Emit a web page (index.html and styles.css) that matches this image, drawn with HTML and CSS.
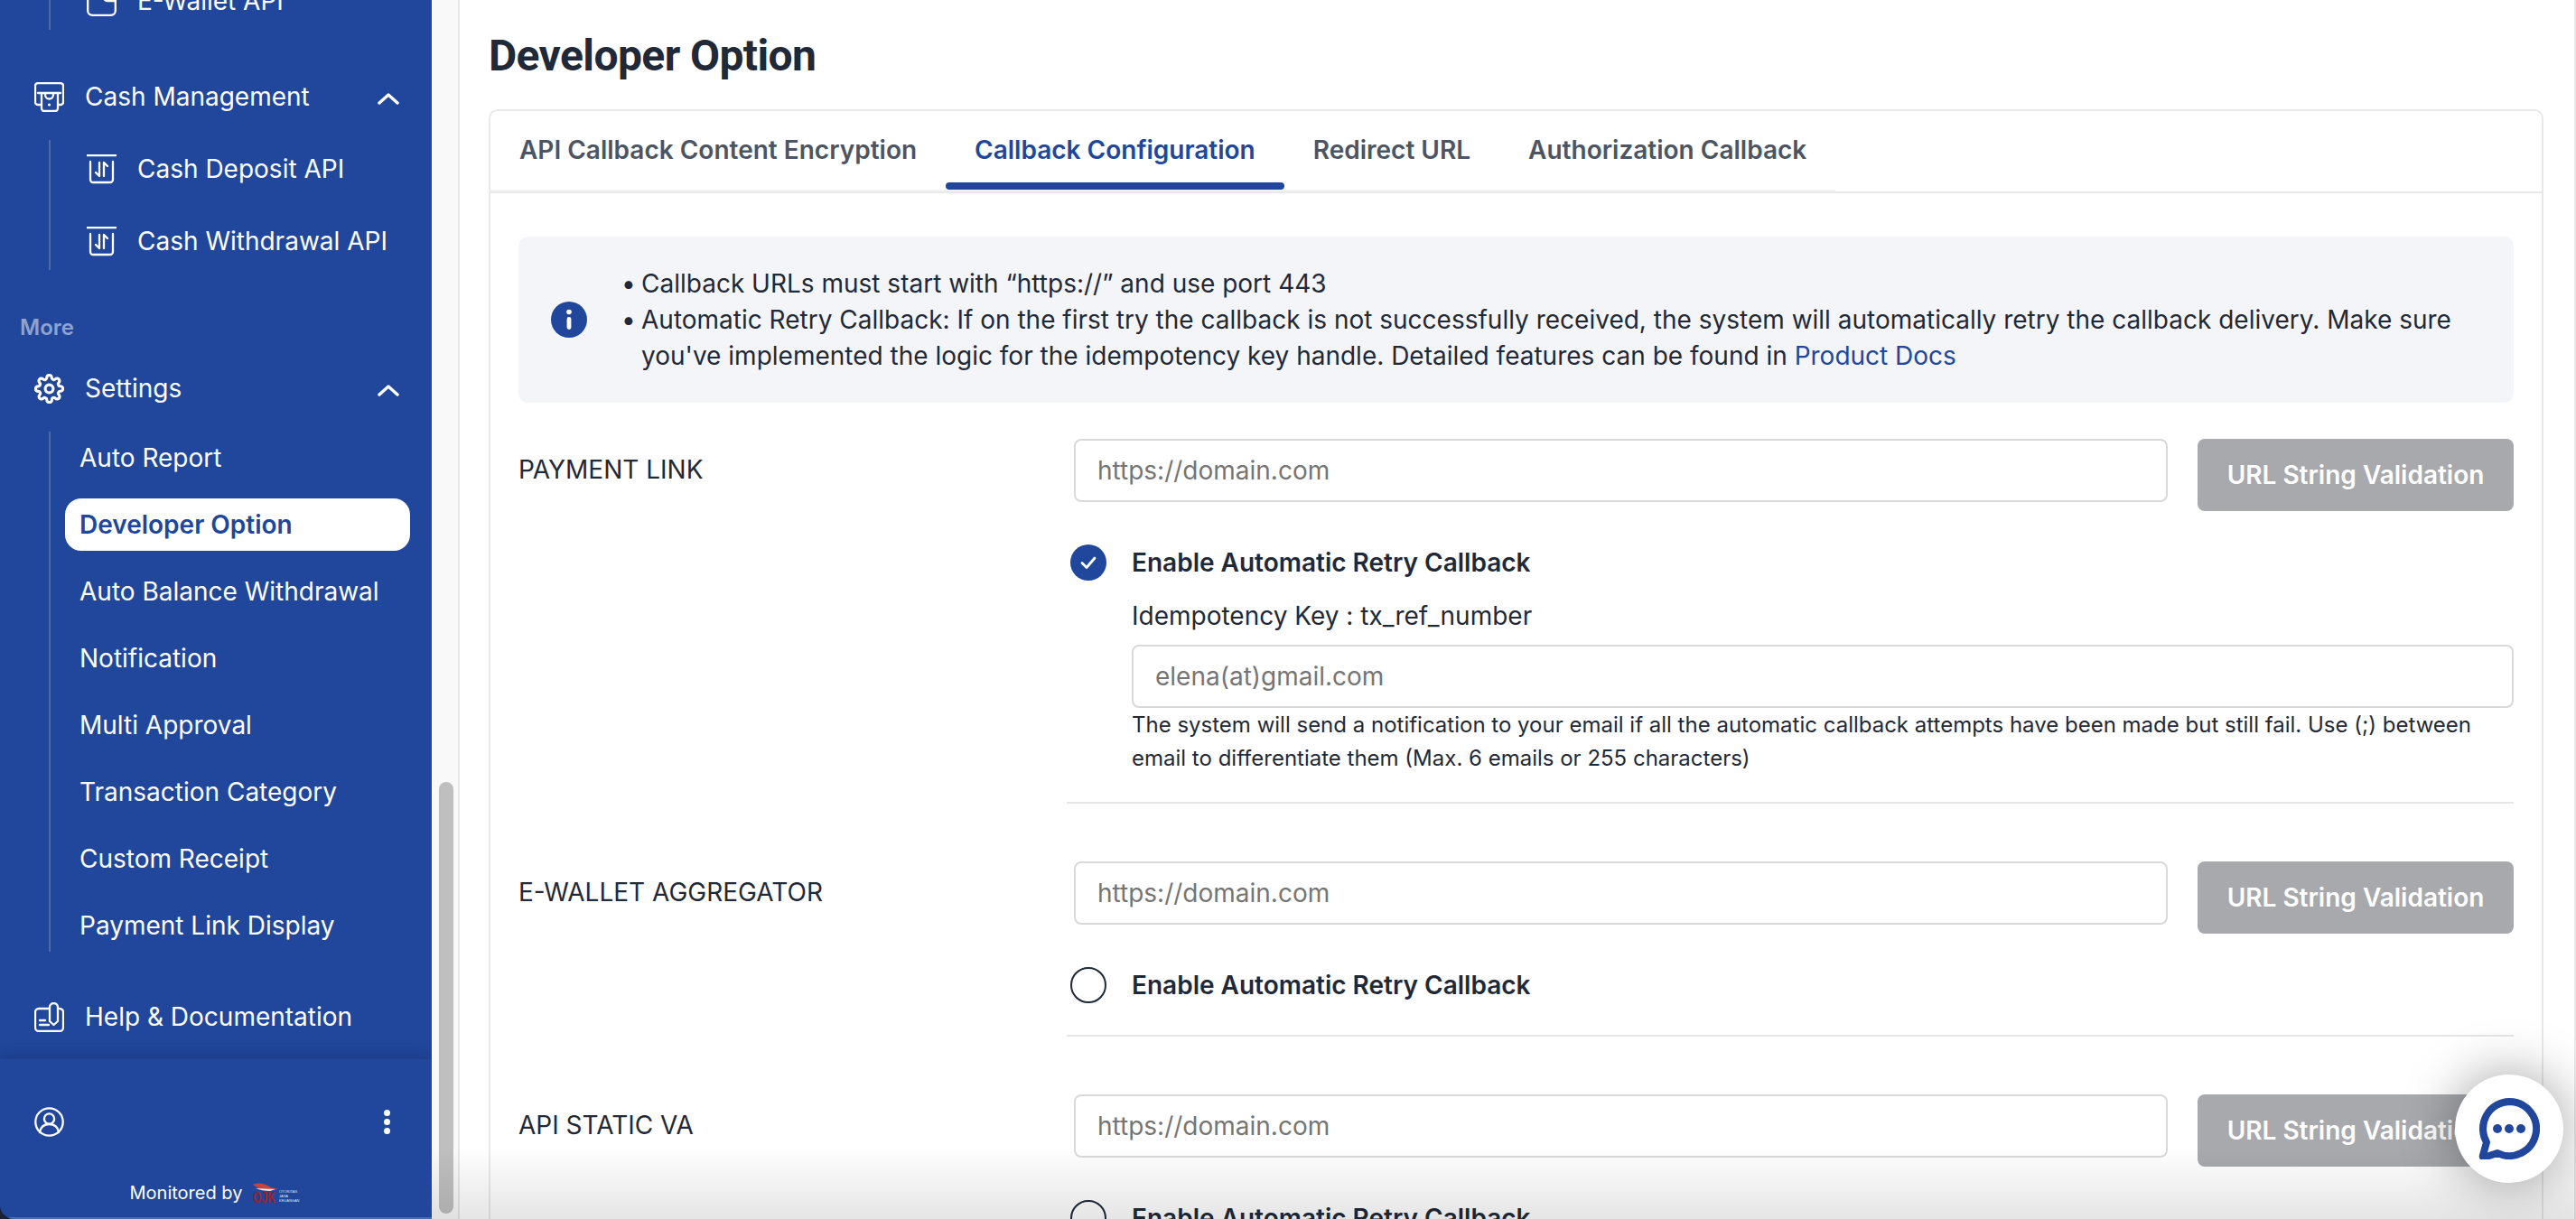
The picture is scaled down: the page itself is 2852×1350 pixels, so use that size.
FILE: index.html
```html
<!DOCTYPE html>
<html lang="en">

<head>
    <meta charset="UTF-8">
    <meta name="viewport" content="width=device-width, initial-scale=1.0">
    <title>Developer Option</title>
    <link rel="stylesheet" href="styles.css">
</head>

<body>
    <aside class="sidebar">
        <nav class="nav">
            <ul class="sub-list sub-list-api">
                <li class="sub-item">
                    <svg class="icon" viewBox="0 0 33 33"><rect x="1.2" y="1.2" width="30.6" height="30.6" rx="5"/><path d="M32 8H23a4 4 0 0 0 0 8h9"/></svg>
                    E-Wallet API
                </li>
            </ul>

            <div class="nav-group">
                <svg class="icon" viewBox="0 0 33 33"><path d="M7 25H4a3 3 0 0 1-3-3V4a3 3 0 0 1 3-3h25a3 3 0 0 1 3 3v18a3 3 0 0 1-3 3h-3M4 12h25M8 12v17a3 3 0 0 0 3 3h12a3 3 0 0 0 3-3V12M12 12v2a4.5 4.5 0 0 0 9 0v-2"/><circle class="dot" cx="16.5" cy="25" r="1.6"/></svg>
                Cash Management
                <svg class="chevron" viewBox="0 0 24 14"><path d="M2 12l10-9 10 9"/></svg>
            </div>
            <ul class="sub-list sub-list-api">
                <li class="sub-item">
                    <svg class="icon" viewBox="0 0 33 33"><path d="M0 1.2h33M4 8v20a3 3 0 0 0 3 3h19a3 3 0 0 0 3-3V8M14 9v15l-4-4M19 24V9l4 4"/></svg>
                    Cash Deposit API
                </li>
                <li class="sub-item">
                    <svg class="icon" viewBox="0 0 33 33"><path d="M0 1.2h33M4 8v20a3 3 0 0 0 3 3h19a3 3 0 0 0 3-3V8M14 9v15l-4-4M19 24V9l4 4"/></svg>
                    Cash Withdrawal API
                </li>
            </ul>

            <div class="nav-title">More</div>

            <div class="nav-group nav-group-settings">
                <svg class="icon" viewBox="0 0 24 24"><circle cx="12" cy="12" r="3.2"/><path d="M19.4 15a1.65 1.65 0 0 0 .33 1.82l.06.06a2 2 0 0 1 0 2.83 2 2 0 0 1-2.83 0l-.06-.06a1.65 1.65 0 0 0-1.82-.33 1.65 1.65 0 0 0-1 1.51V21a2 2 0 0 1-2 2 2 2 0 0 1-2-2v-.09A1.65 1.65 0 0 0 9 19.4a1.65 1.65 0 0 0-1.82.33l-.06.06a2 2 0 0 1-2.83 0 2 2 0 0 1 0-2.83l.06-.06a1.65 1.65 0 0 0 .33-1.82 1.65 1.65 0 0 0-1.51-1H3a2 2 0 0 1-2-2 2 2 0 0 1 2-2h.09A1.65 1.65 0 0 0 4.6 9a1.65 1.65 0 0 0-.33-1.82l-.06-.06a2 2 0 0 1 0-2.83 2 2 0 0 1 2.83 0l.06.06a1.65 1.65 0 0 0 1.82.33H9a1.65 1.65 0 0 0 1-1.51V3a2 2 0 0 1 2-2 2 2 0 0 1 2 2v.09a1.65 1.65 0 0 0 1 1.51 1.65 1.65 0 0 0 1.82-.33l.06-.06a2 2 0 0 1 2.83 0 2 2 0 0 1 0 2.83l-.06.06a1.65 1.65 0 0 0-.33 1.82V9a1.65 1.65 0 0 0 1.51 1H21a2 2 0 0 1 2 2 2 2 0 0 1-2 2h-.09a1.65 1.65 0 0 0-1.51 1z"/></svg>
                Settings
                <svg class="chevron" viewBox="0 0 24 14"><path d="M2 12l10-9 10 9"/></svg>
            </div>
            <ul class="sub-list sub-list-settings">
                <li class="link-item">Auto Report</li>
                <li class="link-item active">Developer Option</li>
                <li class="link-item">Auto Balance Withdrawal</li>
                <li class="link-item">Notification</li>
                <li class="link-item">Multi Approval</li>
                <li class="link-item">Transaction Category</li>
                <li class="link-item">Custom Receipt</li>
                <li class="link-item">Payment Link Display</li>
            </ul>

            <div class="nav-group nav-group-help">
                <svg class="icon" viewBox="0 0 33 33"><path d="M17 7H5a4 4 0 0 0-4 4v17a4 4 0 0 0 4 4h23a4 4 0 0 0 4-4V11a4 4 0 0 0-4-4M17 5.500a4.500 4.500 0 0 1 9 0V21l-4.500 4-4.500-4zM6 20h6M6 25h10"/></svg>
                Help &amp; Documentation
            </div>
        </nav>

        <div class="sidebar-footer">
            <div class="user-row">
                <svg class="icon" viewBox="0 0 33 33"><circle cx="16.5" cy="16.5" r="15.2"/><circle cx="16.5" cy="13" r="5.6"/><path d="M6 28c1-6 5-9 10.5-9s9.5 3 10.5 9"/></svg>
                <span class="more-dots"><i></i><i></i><i></i></span>
            </div>
            <div class="monitored">
                Monitored by
                <svg class="ojk" viewBox="0 0 54 22">
                    <path class="ojk-flag" d="M0 2c6-3 14-1 20 3l8 2c-8 1-16 1-22-1z"/>
                    <path class="ojk-flag-white" d="M3 6c6 0 14 1 22 1l-6 2C13 9 8 8 3 6z"/>
                    <text class="ojk-mark" x="0" y="21.500" textLength="25" lengthAdjust="spacingAndGlyphs">OJK</text>
                    <rect class="ojk-line" x="27" y="8" width="0.6" height="13"/>
                    <text class="ojk-small" x="29" y="11">OTORITAS</text>
                    <text class="ojk-small" x="29" y="16">JASA</text>
                    <text class="ojk-small" x="29" y="21">KEUANGAN</text>
                </svg>
            </div>
        </div>
    </aside>

    <div class="scroll-track"><div class="scroll-thumb"></div></div>

    <main class="main">
        <h1 class="page-title">Developer Option</h1>

        <section class="card">
            <div class="tabs">
                <div class="tab">API Callback Content Encryption</div>
                <div class="tab active">Callback Configuration</div>
                <div class="tab">Redirect URL</div>
                <div class="tab">Authorization Callback</div>
            </div>

            <div class="card-body">
                <div class="info-box">
                    <svg class="info-icon" viewBox="0 0 40 40"><circle cx="20" cy="20" r="20"/><circle class="info-i" cx="20" cy="11.5" r="2.8"/><rect class="info-i" x="17.6" y="17" width="4.8" height="14" rx="2.4"/></svg>
                    <ul class="info-list">
                        <li>Callback URLs must start with “https://” and use port 443</li>
                        <li>Automatic Retry Callback: If on the first try the callback is not successfully received, the system will automatically retry the callback delivery. Make sure you've implemented the logic for the idempotency key handle. Detailed features can be found in <a href="#">Product Docs</a></li>
                    </ul>
                </div>

                <div class="config-row">
                    <label class="config-label">PAYMENT LINK</label>
                    <div class="config-fields">
                        <div class="url-line">
                            <input class="text-input" type="text" placeholder="https://domain.com">
                            <button class="validate-btn" type="button">URL String Validation</button>
                        </div>
                        <div class="retry-line">
                            <svg class="radio" viewBox="0 0 40 40"><circle class="radio-on" cx="20" cy="20" r="20"/><path class="radio-tick" d="M13 20.5l5 5 9-10.5"/></svg>
                            <span class="retry-label">Enable Automatic Retry Callback</span>
                        </div>
                        <div class="retry-detail">
                            <p class="idem-key">Idempotency Key : tx_ref_number</p>
                            <input class="text-input" type="text" placeholder="elena(at)gmail.com">
                            <p class="help-text">The system will send a notification to your email if all the automatic callback attempts have been made but still fail. Use (;) between email to differentiate them (Max. 6 emails or 255 characters)</p>
                        </div>
                    </div>
                </div>

                <div class="config-row">
                    <label class="config-label">E-WALLET AGGREGATOR</label>
                    <div class="config-fields">
                        <div class="url-line">
                            <input class="text-input" type="text" placeholder="https://domain.com">
                            <button class="validate-btn" type="button">URL String Validation</button>
                        </div>
                        <div class="retry-line">
                            <svg class="radio" viewBox="0 0 40 40"><circle class="radio-off" cx="20" cy="20" r="19"/></svg>
                            <span class="retry-label">Enable Automatic Retry Callback</span>
                        </div>
                    </div>
                </div>

                <div class="config-row">
                    <label class="config-label">API STATIC VA</label>
                    <div class="config-fields">
                        <div class="url-line">
                            <input class="text-input" type="text" placeholder="https://domain.com">
                            <button class="validate-btn" type="button">URL String Validation</button>
                        </div>
                        <div class="retry-line">
                            <svg class="radio" viewBox="0 0 40 40"><circle class="radio-off" cx="20" cy="20" r="19"/></svg>
                            <span class="retry-label">Enable Automatic Retry Callback</span>
                        </div>
                    </div>
                </div>
            </div>
        </section>
    </main>

    <div class="bottom-fade"></div>

    <button class="chat-btn" type="button" aria-label="Chat">
        <svg viewBox="0 0 68 68"><path class="chat-bubble" d="M34 4a30 30 0 1 1-13 57l-14 4.500q-3 1-2-2l4-14.500A30 30 0 0 1 34 4z"/><circle cx="21" cy="34" r="5"/><circle cx="34" cy="34" r="5"/><circle cx="47" cy="34" r="5"/></svg>
    </button>
</body>

</html>
```

FILE: styles.css
```css
* {
    box-sizing: border-box;
}

html,
body {
    height: 100%;
}

body {
    position: relative;
    display: flex;
    margin: 0;
    overflow: hidden;
    font-family: Inter, "Liberation Sans", sans-serif;
    font-size: 28px;
    color: #1f2937;
    background: #1b2233;
}

ul {
    margin: 0;
    padding: 0;
    list-style: none;
}

p {
    margin: 0;
}

/* sidebar */
.sidebar {
    display: flex;
    flex-direction: column;
    flex: 0 0 478px;
    height: 100%;
    overflow: hidden;
    color: #fff;
    background: #20479b;
    border-bottom-left-radius: 16px;
}

.nav {
    flex: 1;
    min-height: 0;
    overflow: hidden;
}

.icon {
    flex: 0 0 33px;
    width: 33px;
    height: 33px;
    fill: none;
    stroke: #fff;
    stroke-width: 2.3;
    stroke-linecap: round;
    stroke-linejoin: round;
}

.icon .dot {
    fill: #fff;
    stroke: none;
}

.nav-group {
    display: flex;
    align-items: center;
    gap: 23px;
    height: 64px;
    margin-top: 42px;
    padding: 0 36px 0 38px;
}

.nav-group-settings {
    margin-top: 18px;
}

.nav-group-help {
    margin-top: 40px;
}

.chevron {
    width: 24px;
    height: 14px;
    margin-left: auto;
    margin-top: 4px;
    fill: none;
    stroke: #fff;
    stroke-width: 3.4;
    stroke-linecap: round;
    stroke-linejoin: round;
}

.sub-list {
    display: flex;
    flex-direction: column;
    gap: 16px;
    margin-left: 54px;
    border-left: 2px solid #4c6bae;
}

.sub-list-api {
    margin-top: 16px;
}

.sub-list-api:first-child {
    margin-top: -31px;
}

.sub-list-settings {
    margin-top: 16px;
}

.sub-item {
    display: flex;
    align-items: center;
    gap: 23px;
    height: 64px;
    padding-left: 40px;
}

.nav-title {
    margin: 47px 0 0 22px;
    font-size: 24px;
    font-weight: 600;
    line-height: 34px;
    color: #8ea3d1;
}

.link-item {
    width: 382px;
    height: 58px;
    margin-left: 16px;
    padding-left: 16px;
    line-height: 58px;
    border-radius: 18px;
}

.link-item.active {
    font-weight: 600;
    color: #20479b;
    background: #fff;
}

.sidebar-footer {
    flex: 0 0 177px;
    background: #20479b;
    box-shadow: 0 -6px 14px rgba(20, 40, 90, 0.28);
    position: relative;
    border-bottom: 2px solid #4a6bb0;
}

.user-row {
    display: flex;
    align-items: center;
    justify-content: space-between;
    padding: 53px 46px 0 38px;
}

.more-dots {
    display: flex;
    flex-direction: column;
    gap: 3px;
}

.more-dots i {
    width: 7px;
    height: 7px;
    background: #fff;
    border-radius: 50%;
}

.monitored {
    display: flex;
    align-items: center;
    justify-content: center;
    gap: 12px;
    margin-top: 49px;
    font-size: 20px;
    line-height: 26px;
}

.ojk {
    width: 54px;
    height: 22px;
}

.ojk-flag {
    fill: #c4453f;
}

.ojk-flag-white {
    fill: #f3e9e6;
}

.ojk-mark {
    font-family: "Liberation Sans", sans-serif;
    font-size: 17px;
    font-weight: 700;
    fill: #a01f1f;
}

.ojk-line {
    fill: #a01f1f;
}

.ojk-small {
    font-family: "Liberation Sans", sans-serif;
    font-size: 4px;
    fill: #dfe6f4;
}

/* page scrollbar */
.scroll-track {
    flex: 0 0 31px;
    height: 100%;
    padding: 866px 5px 6px 8px;
    background: #f9f9f9;
    border-right: 2px solid #e8e8e8;
}

.scroll-thumb {
    width: 16px;
    height: 100%;
    background: #bfbfbf;
    border-radius: 8px;
}

/* main */
.main {
    flex: 1;
    min-width: 0;
    height: 100%;
    overflow: hidden;
    padding: 0 34px 0 32px;
    background: #fff;
    border-right: 2px solid #e8e8e8;
}

.page-title {
    height: 121px;
    margin: 0;
    font-family: Roboto, "Liberation Sans", sans-serif;
    font-size: 48px;
    font-weight: 700;
    line-height: 124px;
    letter-spacing: -0.6px;
    color: #1f2937;
}

.card {
    border: 2px solid #e9e9e9;
    border-bottom: 0;
    border-radius: 10px 10px 0 0;
}

.tabs {
    display: flex;
    width: fit-content;
    height: 89px;
    border-bottom: 2px solid #f2f2f2;
}

.tab {
    position: relative;
    padding: 0 32px;
    font-weight: 600;
    line-height: 87px;
    color: #4b5563;
}

.tab.active {
    color: #20479b;
}

.tab.active::after {
    content: "";
    position: absolute;
    left: 0;
    right: 0;
    bottom: 0;
    height: 8px;
    background: #20479b;
    border-radius: 4px;
}

.card-body {
    padding: 48px 31px 0;
    border-top: 2px solid #e9e9e9;
}

.info-box {
    display: flex;
    align-items: center;
    padding: 32px 0;
    background: #f4f5f9;
    border-radius: 10px;
}

.info-icon {
    flex: 0 0 40px;
    width: 40px;
    height: 40px;
    margin: 0 36px;
    fill: #20479b;
}

.info-i {
    fill: #fff;
}

.info-list {
    padding-left: 2px;
    padding-right: 50px;
    line-height: 40px;
}

.info-list li {
    padding-left: 22px;
    text-indent: -22px;
}

.info-list li::before {
    content: "•";
    display: inline-block;
    width: 22px;
    text-indent: 0;
}

.info-list a {
    color: #20479b;
    text-decoration: none;
}

.config-row {
    display: flex;
    padding-bottom: 37px;
    margin-top: 40px;
    position: relative;
}

.config-row + .config-row {
    margin-top: 64px;
}

.config-label {
    flex: 0 0 607px;
    line-height: 68px;
}

.config-fields {
    flex: 1;
    min-width: 0;
}

.config-row::after {
    content: "";
    position: absolute;
    left: 607px;
    right: 0;
    bottom: 0;
    height: 2px;
    background: #e6e6e6;
}

.url-line {
    display: flex;
    align-items: flex-start;
    gap: 33px;
    padding-left: 8px;
}

.text-input {
    flex: 1;
    display: block;
    width: 100%;
    min-width: 0;
    height: 70px;
    padding: 0 24px;
    font-family: inherit;
    font-size: 28px;
    color: #1f2937;
    background: #fff;
    border: 2px solid #d9d9d9;
    border-radius: 8px;
}

.validate-btn {
    flex: 0 0 350px;
    height: 80px;
    font-family: inherit;
    font-size: 28px;
    font-weight: 600;
    color: #fff;
    background: #a7a9ad;
    border: 0;
    border-radius: 8px;
}

.retry-line {
    display: flex;
    align-items: center;
    gap: 28px;
    margin: 37px 0 0 4px;
}

.radio {
    flex: 0 0 40px;
    width: 40px;
    height: 40px;
}

.radio-on {
    fill: #20479b;
}

.radio-tick {
    fill: none;
    stroke: #fff;
    stroke-width: 2.8;
    stroke-linecap: round;
    stroke-linejoin: round;
}

.radio-off {
    fill: #fff;
    stroke: #1f2937;
    stroke-width: 2;
}

.retry-label {
    font-weight: 600;
    line-height: 40px;
}

.retry-detail {
    margin: 19px 0 0 72px;
}

.idem-key {
    margin-bottom: 12px;
    line-height: 40px;
}

.help-text {
    margin-bottom: -5px;
    font-size: 24px;
    line-height: 37px;
}

/* things lying over the page */
.bottom-fade {
    position: absolute;
    left: 478px;
    right: 0;
    bottom: 0;
    height: 80px;
    background: linear-gradient(rgba(0, 0, 0, 0), rgba(0, 0, 0, 0.1));
    pointer-events: none;
}

.chat-btn {
    position: absolute;
    right: 14px;
    bottom: 40px;
    display: flex;
    align-items: center;
    justify-content: center;
    width: 120px;
    height: 120px;
    padding: 0;
    background: #fff;
    border: 0;
    border-radius: 50%;
    box-shadow: 0 0 60px rgba(0, 0, 0, 0.38);
}

.chat-btn svg {
    width: 68px;
    height: 68px;
    fill: #20479b;
}

.chat-bubble {
    fill: none;
    stroke: #20479b;
    stroke-width: 8;
    stroke-linejoin: round;
}
```
